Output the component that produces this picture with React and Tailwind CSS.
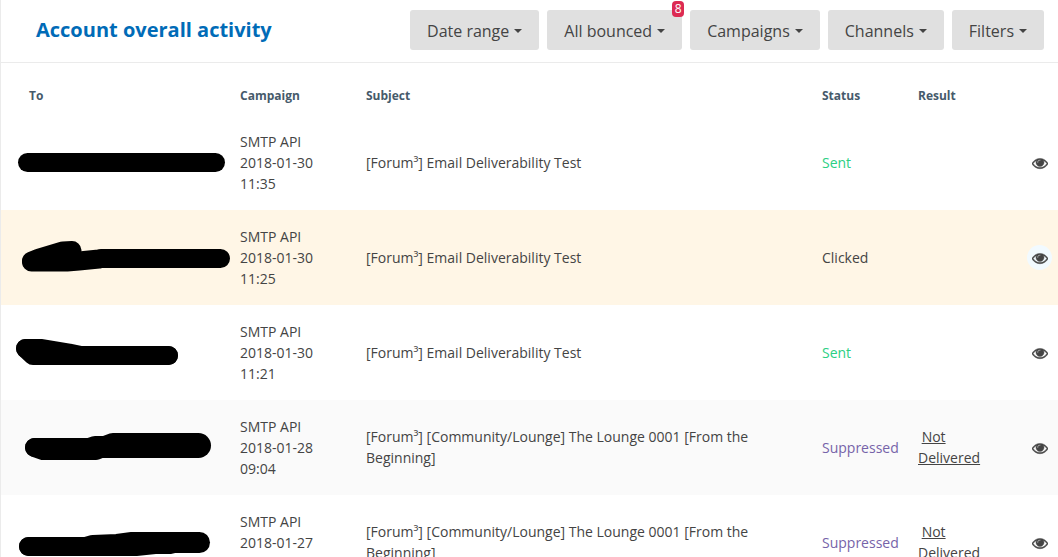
import React from 'react';

const filters = [
  { label: 'Date range' },
  { label: 'All bounced', count: 8 },
  { label: 'Campaigns' },
  { label: 'Channels' },
  { label: 'Filters' },
];

const messages = [
  {
    date: '2018-01-30',
    time: '11:35',
    subject: '[Forum³] Email Deliverability Test',
    status: 'Sent',
    strokes: [{ d: 'M26.5 47.5H214.5', width: 19 }],
  },
  {
    date: '2018-01-30',
    time: '11:25',
    subject: '[Forum³] Email Deliverability Test',
    status: 'Clicked',
    highlighted: true,
    strokes: [
      { d: 'M30.5 51L38 48L48 45L62 41L71 40.5', width: 19 },
      { d: 'M30.5 52H66L78 51L98 49L100 48.5H219.5', width: 19 },
    ],
  },
  {
    date: '2018-01-30',
    time: '11:21',
    subject: '[Forum³] Email Deliverability Test',
    status: 'Sent',
    strokes: [
      { d: 'M24.5 43.5H41L50 45L68 48L80 50.5H167.5', width: 19 },
      { d: 'M24.5 43.5L32 50.5H167.5', width: 19 },
    ],
  },
  {
    date: '2018-01-28',
    time: '09:04',
    subject: '[Forum³] [Community/Lounge] The Lounge 0001 [From the Beginning]',
    status: 'Suppressed',
    result: 'Not Delivered',
    strokes: [
      { d: 'M33.5 47.5H88L94 45.5H104L112 42.5H150', width: 19 },
      { d: 'M33.5 47.5L42 50.5H95L100 48.5H150', width: 19 },
      { d: 'M122 45.5H197.5', width: 25 },
    ],
  },
  {
    date: '2018-01-27',
    time: '22:10',
    subject: '[Forum³] [Community/Lounge] The Lounge 0001 [From the Beginning]',
    status: 'Suppressed',
    result: 'Not Delivered',
    strokes: [
      { d: 'M27.5 51.5H135L154 49.5H170', width: 19 },
      { d: 'M27.5 51.5H85L92 49.5L116 48.5L131 46.5H170', width: 19 },
      { d: 'M142 47.5H198.5', width: 21 },
    ],
  },
];

const statusColors = {
  Sent: 'text-[#2bcf83]',
  Clicked: 'text-[#444444]',
  Suppressed: 'text-[#7663a9]',
};

const EyeIcon = () => (
  <svg
    viewBox="0 0 1792 1792"
    className="w-4 h-4"
    fill="currentColor"
    stroke="currentColor"
    strokeWidth="50"
    aria-hidden="true"
  >
    <path d="M1664 960q-152-236-381-353 61 104 61 225 0 185-131.5 316.5t-316.5 131.5-316.5-131.5-131.5-316.5q0-121 61-225-229 117-381 353 133 205 333.5 326.5t434.5 121.5 434.5-121.5 333.5-326.5zm-720-384q0-20-14-34t-34-14q-125 0-214.5 89.5t-89.5 214.5q0 20 14 34t34 14 34-14 14-34q0-86 61-147t147-61q20 0 34-14t14-34zm848 384q0 34-20 69-140 230-376.5 368.5t-499.5 138.5-499.5-139-376.5-368q-20-35-20-69t20-69q140-229 376.5-368t499.5-139 499.5 139 376.5 368q20 35 20 69z" />
  </svg>
);

const FilterButton = ({ label, count }) => (
  <button
    type="button"
    aria-haspopup="true"
    className="relative flex items-center gap-[5px] h-10 pt-0.5 px-[17px] rounded-[3px] bg-[#e0e0e0] text-base whitespace-nowrap"
  >
    <span>{label}</span>
    <svg viewBox="0 0 8 4" className="w-2 h-1" fill="currentColor" aria-hidden="true">
      <path d="M0 0H8L4 4Z" />
    </svg>
    {count && (
      <span className="absolute -top-[9px] -right-0.5 w-3 h-4 rounded bg-[#dc2a52] text-white text-xs leading-4 text-center">
        {count}
      </span>
    )}
  </button>
);

// Recipient address, blacked out with a marker
const HiddenRecipient = ({ strokes }) => (
  <svg
    viewBox="0 0 231 95"
    className="block w-[231px] h-[95px]"
    fill="none"
    stroke="#000000"
    strokeLinecap="round"
    strokeLinejoin="round"
    role="img"
    aria-label="Hidden recipient"
  >
    {strokes.map((stroke) => (
      <path key={stroke.d} d={stroke.d} strokeWidth={stroke.width} />
    ))}
  </svg>
);

const MessageRow = ({ message }) => (
  <tr className={message.highlighted ? 'bg-[#fff6e6]' : 'even:bg-[#fafafa]'}>
    <td className="p-0">
      <HiddenRecipient strokes={message.strokes} />
    </td>
    <td className="px-2 py-4">
      SMTP API
      <br />
      {message.date}
      <br />
      {message.time}
    </td>
    <td className="px-2 pt-4 pb-[17px]">{message.subject}</td>
    <td className={`px-2 py-4 whitespace-nowrap ${statusColors[message.status]}`}>{message.status}</td>
    <td className="px-2 pt-4 pb-[17px]">
      {message.result && (
        <>
          &nbsp;
          <a href="#result" className="underline">{message.result}</a>
        </>
      )}
    </td>
    <td className="p-0">
      <button
        type="button"
        aria-label="View message"
        className={`flex items-center justify-center w-[25px] h-[25px] ml-auto mr-1.5 rounded-full ${message.highlighted ? 'bg-[#f2faff]' : ''}`}
      >
        <EyeIcon />
      </button>
    </td>
  </tr>
);

const App = () => {
  return (
    <div className="h-screen overflow-hidden bg-white border-l border-[#ebebeb] font-['Open_Sans',sans-serif] text-[#444444]">
      {/* Header */}
      <header className="flex items-start justify-between pt-2.5 pb-3 pl-[35px] pr-3.5 border-b border-[#ebebeb]">
        <h1 className="text-xl leading-10 font-bold text-[#006bb7] whitespace-nowrap">Account overall activity</h1>
        <div className="flex gap-2">
          {filters.map((filter) => (
            <FilterButton key={filter.label} {...filter} />
          ))}
        </div>
      </header>

      {/* Messages */}
      <table className="w-full table-fixed text-sm leading-[21px]">
        <colgroup>
          <col className="w-[231px]" />
          <col className="w-[126px]" />
          <col />
          <col className="w-24" />
          <col className="w-[104px]" />
          <col className="w-11" />
        </colgroup>
        <thead>
          <tr className="h-[52px] text-left text-xs text-[#465a6b]">
            <th className="pl-7 pr-2 pt-5 pb-1.5">To</th>
            <th className="px-2 pt-5 pb-1.5">Campaign</th>
            <th className="px-2 pt-5 pb-1.5">Subject</th>
            <th className="px-2 pt-5 pb-1.5">Status</th>
            <th className="px-2 pt-5 pb-1.5">Result</th>
            <td />
          </tr>
        </thead>
        <tbody>
          {messages.map((message) => (
            <MessageRow key={`${message.date} ${message.time}`} message={message} />
          ))}
        </tbody>
      </table>
    </div>
  );
};

export default App;
